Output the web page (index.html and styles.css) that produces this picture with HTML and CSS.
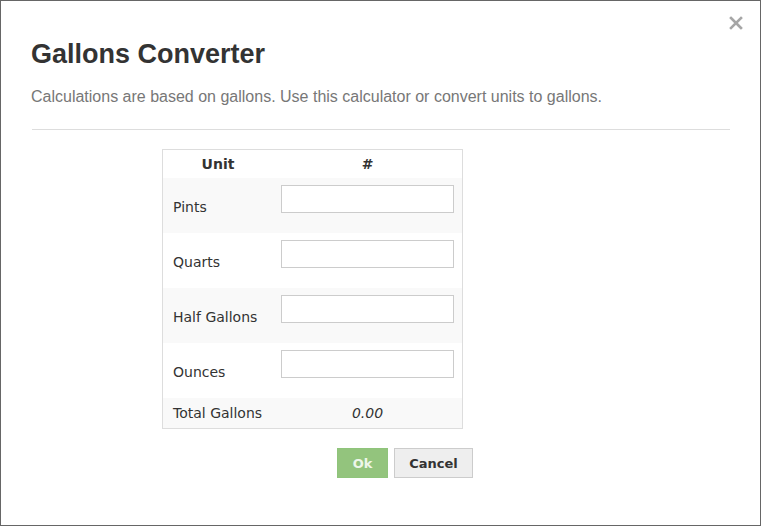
FILE: index.html
```html
<!DOCTYPE html>
<html lang="en">
<head>
    <meta charset="UTF-8">
    <title>Gallons Converter</title>
    <link rel="stylesheet" href="styles.css">
</head>
<body>
    <div class="modal">
        <button class="close" type="button" aria-label="Close">
            <svg width="14" height="14" viewBox="0 0 14 14">
                <path d="M2 2 L12 12 M12 2 L2 12" stroke="#a6a6a6" stroke-width="2.6" stroke-linecap="square" fill="none"/>
            </svg>
        </button>
        <h1 class="title">Gallons Converter</h1>
        <p class="lead">Calculations are based on gallons. Use this calculator or convert units to gallons.</p>
        <hr class="divider">

        <div class="converter">
            <table class="units">
                <thead>
                    <tr>
                        <th class="col-unit">Unit</th>
                        <th class="col-num">#</th>
                    </tr>
                </thead>
                <tbody>
                    <tr class="striped">
                        <td class="label">Pints</td>
                        <td><input type="text" class="field"></td>
                    </tr>
                    <tr>
                        <td class="label">Quarts</td>
                        <td><input type="text" class="field"></td>
                    </tr>
                    <tr class="striped">
                        <td class="label">Half Gallons</td>
                        <td><input type="text" class="field"></td>
                    </tr>
                    <tr>
                        <td class="label">Ounces</td>
                        <td><input type="text" class="field"></td>
                    </tr>
                    <tr class="striped total">
                        <td>Total Gallons</td>
                        <td class="total-value"><em>0.00</em></td>
                    </tr>
                </tbody>
            </table>

            <div class="actions">
                <button class="btn btn-ok" type="button">Ok</button>
                <button class="btn btn-cancel" type="button">Cancel</button>
            </div>
        </div>
    </div>
</body>
</html>
```

FILE: styles.css
```css
body {
    margin: 0;
    background: #fff;
}
.modal {
    position: relative;
    width: 761px;
    height: 526px;
    box-sizing: border-box;
    border: 1px solid #666;
    background: #fff;
    padding: 37px 30px 0 30px;
    font-family: 'Liberation Sans', Arial, sans-serif;
}
.close {
    position: absolute;
    top: 15px;
    right: 17px;
    border: none;
    background: none;
    padding: 0;
    width: 14px;
    height: 14px;
    cursor: pointer;
}
.close svg {
    display: block;
}
.title {
    margin: 0;
    font-size: 27px;
    line-height: 32px;
    font-weight: 700;
    color: #333;
}
.lead {
    margin: 17px 0 0;
    font-size: 16px;
    line-height: 20px;
    color: #777;
}
.divider {
    margin: 22px 0 0 1px;
    border: none;
    border-top: 1px solid #ddd;
    height: 0;
}
.converter {
    padding-top: 19px;
    font-family: 'DejaVu Sans', Verdana, sans-serif;
    font-size: 14px;
    color: #333;
}
.units {
    margin-left: 131px;
    border-collapse: collapse;
    border: 1px solid #ddd;
}
.units th {
    padding: 6px 8px 5px;
    line-height: 17px;
    font-size: 14px;
    font-weight: 700;
    text-align: center;
}
.units th.col-unit {
    width: 94px;
    padding-left: 8px;
}
.units th.col-num {
    width: 173px;
}
.units td {
    padding: 7px 8px 8px 10px;
    line-height: 17px;
    vertical-align: middle;
}
.units td.label {
    padding-top: 9px;
    padding-bottom: 6px;
}
.units td:last-child {
    padding-left: 8px;
}
.units tr.striped td {
    background: #f9f9f9;
}
.field {
    display: block;
    width: 173px;
    height: 28px;
    margin-bottom: 12px;
    box-sizing: border-box;
    border: 1px solid #ccc;
    background: #fff;
    padding: 4px 6px;
    font: inherit;
}
.units tr.total td {
    padding-top: 7px;
    padding-bottom: 6px;
    line-height: 17px;
}
.units td.total-value {
    text-align: center;
}
.actions {
    display: flex;
    gap: 6px;
    margin: 19px 0 0 306px;
}
.btn {
    height: 30px;
    box-sizing: border-box;
    font-family: 'DejaVu Sans', Verdana, sans-serif;
    font-size: 13px;
    font-weight: 700;
    cursor: pointer;
}
.btn-ok {
    width: 51px;
    border: 1px solid #8fc47b;
    background: #93c47d;
    color: #eef6e9;
}
.btn-cancel {
    width: 79px;
    border: 1px solid #ccc;
    background: #eee;
    color: #333;
}
```
